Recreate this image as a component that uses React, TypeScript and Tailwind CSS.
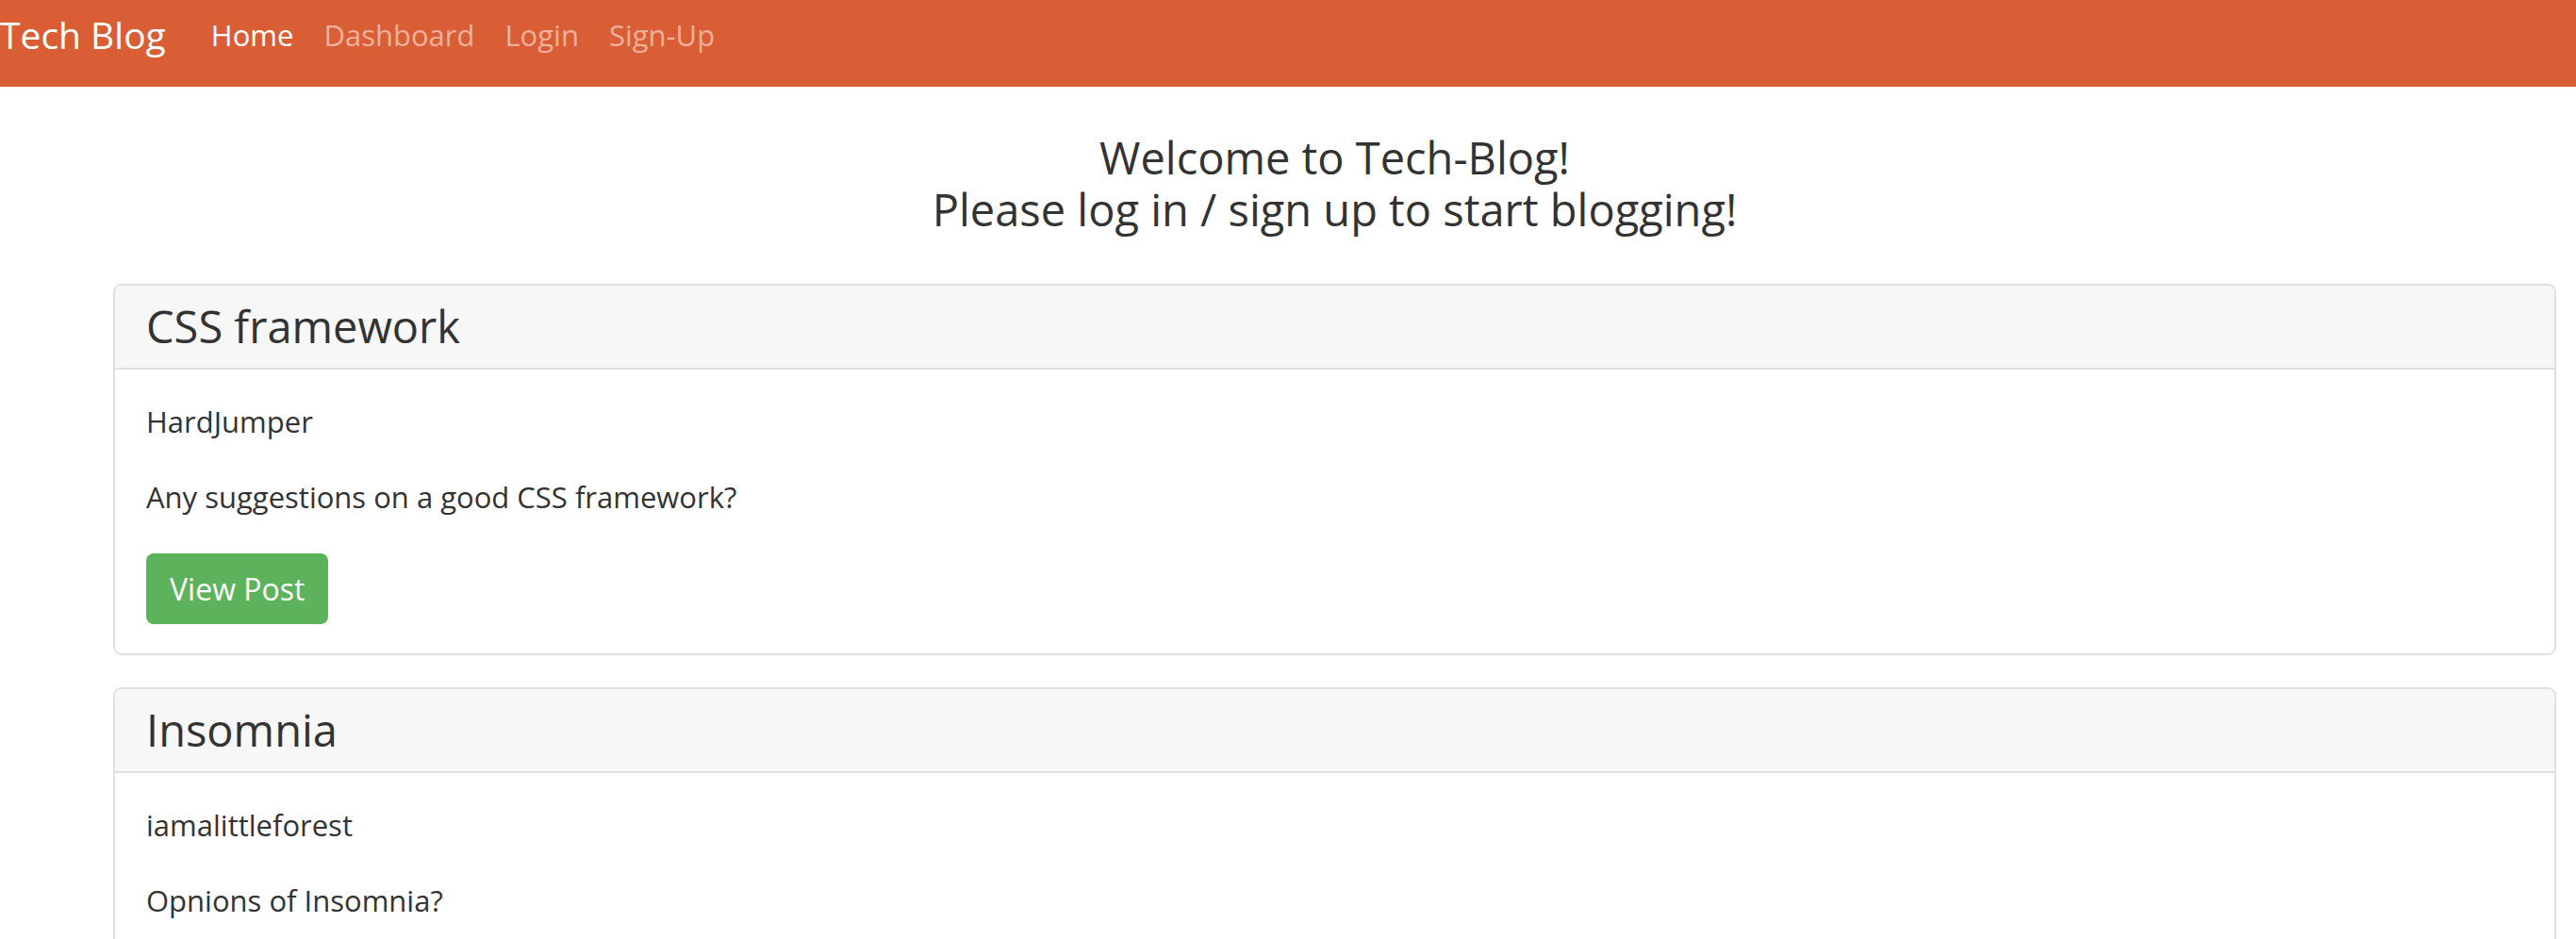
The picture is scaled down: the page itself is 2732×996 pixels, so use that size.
import React from 'react';

type Post = {
  id: number;
  title: string;
  author: string;
  body: string;
};

const posts: Post[] = [
  { id: 1, title: 'CSS framework', author: 'HardJumper', body: 'Any suggestions on a good CSS framework?' },
  { id: 2, title: 'Insomnia', author: 'iamalittleforest', body: 'Opnions of Insomnia?' },
];

const navLinks = [
  { label: 'Home', active: true },
  { label: 'Dashboard', active: false },
  { label: 'Login', active: false },
  { label: 'Sign-Up', active: false },
];

const Navbar: React.FC = () => {
  return (
    <nav className="h-[92px] bg-[#da5e35] flex items-start pt-[13px]">
      <a className="text-[39px] leading-[48px] text-white mr-[32px]">Tech Blog</a>
      <ul className="flex items-center h-[48px]">
        {navLinks.map((link) => (
          <li key={link.label}>
            <a className={`px-[16px] text-[31px] ${link.active ? 'text-white' : 'text-[#eeb09b]'}`}>{link.label}</a>
          </li>
        ))}
      </ul>
    </nav>
  );
};

const PostCard: React.FC<{ post: Post }> = ({ post }) => {
  return (
    <div className="border-2 border-[#e0e0e0] rounded-[9px] overflow-hidden">
      <div className="h-[89px] bg-[#f7f7f7] border-b-2 border-[#e0e0e0] flex items-center px-[33px]">
        <h2 className="text-[47px] text-[#333]">{post.title}</h2>
      </div>
      <div className="px-[33px] pt-[34px] pb-[31px] text-[31px] text-[#333]">
        <p className="leading-[42px]">{post.author}</p>
        <p className="leading-[42px] mt-[38px]">{post.body}</p>
        <button className="mt-[39px] h-[75px] px-[25px] rounded-[8px] bg-[#5cb35c] text-white text-[32px]">View Post</button>
      </div>
    </div>
  );
};

export default function App() {
  return (
    <div className="min-h-screen bg-white font-['Open_Sans',sans-serif]">
      <Navbar />
      <main className="pl-[120px] pr-[21px]">
        <div className="text-center text-[#333] text-[47px] leading-[55px] pt-[48px] pb-[51px]">
          <div>Welcome to Tech-Blog!</div>
          <div>Please log in / sign up to start blogging!</div>
        </div>
        <div className="flex flex-col gap-[34px]">
          {posts.map((post) => (
            <PostCard key={post.id} post={post} />
          ))}
        </div>
      </main>
    </div>
  );
}
